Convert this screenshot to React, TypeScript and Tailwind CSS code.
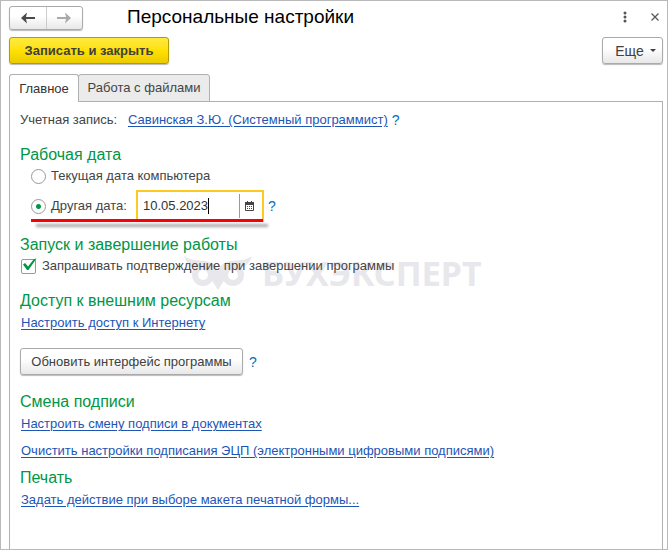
import { useState, type ReactNode } from "react";

function Heading({ children }: { children: ReactNode }) {
  return <h2 className="text-base leading-5 text-[#009646]">{children}</h2>;
}

function Link({ children }: { children: ReactNode }) {
  return (
    <a href="#" className="leading-5 text-[#1d55b5] underline underline-offset-2">
      {children}
    </a>
  );
}

function Help() {
  return (
    <button type="button" aria-label="Справка" className="text-sm leading-5 text-[#0070ba]">
      ?
    </button>
  );
}

function Arrow({ className }: { className: string }) {
  return (
    <svg viewBox="0 0 14 12" className={className} fill="currentColor" aria-hidden="true">
      <path d="M0 6 6 .5 5 4.900h9v2.200H5l1 4.400z" />
    </svg>
  );
}

function Watermark() {
  return (
    <div className="pointer-events-none absolute top-[154px] left-[174px] flex items-center gap-2.5 text-[#e7e7ec]">
      <svg viewBox="0 0 68 34" className="h-[34px] w-[68px]" fill="currentColor" aria-hidden="true">
        <path d="M0 0c7 5 14 4 21 5 7 1 11 4 13 10 2-6 6-9 13-10 7-1 14 0 21-5-2 6-5 9-9 11L46 10l-6 9 1 4-7 11-7-11 1-4-6-9L9 11C5 9 2 6 0 0z" />
        <path fillRule="evenodd" d="M19 8a11 11 0 1 0 0 22 11 11 0 0 0 0-22zM49 8a11 11 0 1 0 0 22 11 11 0 0 0 0-22z" />
        <circle cx="19" cy="19" r="5" fill="#fff" />
        <circle cx="49" cy="19" r="5" fill="#fff" />
      </svg>
      <span className="font-['Noto_Sans',sans-serif] text-[34px] leading-8 font-bold">БУХЭКСПЕРТ</span>
    </div>
  );
}

const plainButton =
  "rounded-[3px] border border-[#aaa] bg-linear-to-b from-white from-40% to-[#e8e8e8] text-[#404040] shadow-[0_1px_1px_#bbb]";

const radio =
  "h-[15px] w-[15px] appearance-none rounded-full border border-[#999] bg-white checked:bg-[radial-gradient(#009646_0_2px,white_3px)]";

export default function App() {
  const [other, setOther] = useState(true);
  const [date, setDate] = useState("10.05.2023");
  const [confirm, setConfirm] = useState(true);

  return (
    <main className="flex min-h-screen flex-col border border-[#b9b9b9] bg-white pr-1 pl-2 font-['Liberation_Sans',Arial,sans-serif] text-[13px] text-[#444]">
      <header className="flex h-8 items-center">
        <div className={`${plainButton} mt-px flex h-6 w-[74px]`}>
          <button type="button" aria-label="Назад" className="flex flex-1 items-center justify-center border-r border-[#ccc]">
            <Arrow className="h-3 w-3.5 text-[#4a4a4a]" />
          </button>
          <button type="button" aria-label="Вперед" className="flex flex-1 items-center justify-center">
            <Arrow className="h-3 w-3.5 rotate-180 text-[#aaa]" />
          </button>
        </div>
        <h1 className="ml-11 flex-1 text-[19px] leading-6 text-black">Персональные настройки</h1>
        <button type="button" aria-label="Меню" className="mr-6 text-[#555]">
          <svg viewBox="0 0 4 12" className="h-3 w-1" fill="currentColor" aria-hidden="true">
            <circle cx="2" cy="2" r="1.500" />
            <circle cx="2" cy="6" r="1.500" />
            <circle cx="2" cy="10" r="1.500" />
          </svg>
        </button>
        <button type="button" aria-label="Закрыть" className="mr-1 text-[#555]">
          <svg viewBox="0 0 8 8" className="h-2 w-2" stroke="currentColor" strokeWidth="1.2" aria-hidden="true">
            <path d="m.5.5 7 7m0-7-7 7" />
          </svg>
        </button>
      </header>

      <div className="mt-1 flex items-start justify-between">
        <button
          type="button"
          className="h-[27px] w-40 rounded-[3px] border border-[#b39b00] bg-linear-to-b from-[#ffea3c] via-[#ffe100] to-[#ebcb00] font-bold text-[#404040] shadow-[0_1px_1px_#bbb]"
        >
          Записать и закрыть
        </button>
        <button type="button" className={`${plainButton} flex h-[27px] w-[61px] items-center justify-center gap-1.5 pl-1.5 text-sm`}>
          Еще
          <svg viewBox="0 0 6 3" className="h-[3px] w-1.5" fill="currentColor" aria-hidden="true">
            <path d="M0 0h6L3 3z" />
          </svg>
        </button>
      </div>

      <div role="tablist" className="relative z-10 mt-2.5 -mb-px flex h-7">
        <button type="button" role="tab" aria-selected="true" className="w-[70px] rounded-t-[3px] border border-b-0 border-[#b0b0b0] bg-white text-[#333]">
          Главное
        </button>
        <button type="button" role="tab" aria-selected="false" className="-ml-px w-[132px] rounded-t-[3px] border border-[#b0b0b0] bg-[#ebebeb]">
          Работа с файлами
        </button>
      </div>

      <section role="tabpanel" className="relative flex-1 border border-b-0 border-[#b0b0b0] px-2.5 pt-2">
        <Watermark />
        <div className="relative flex flex-col items-start">
          <div className="flex">
            <span className="w-[108px] leading-5">Учетная запись:</span>
            <Link>Савинская З.Ю. (Системный программист)</Link>
            <span className="ml-1 flex"><Help /></span>
          </div>

          <div className="mt-[15px]"><Heading>Рабочая дата</Heading></div>
          <label className="mt-px ml-[11px] flex h-5 items-center gap-[5px]">
            <input type="radio" name="date" checked={!other} onChange={() => setOther(false)} className={radio} />
            Текущая дата компьютера
          </label>
          <div className="relative mt-1 ml-[11px] flex h-8 items-center">
            <label className="flex w-[105px] items-center gap-[5px]">
              <input type="radio" name="date" checked={other} onChange={() => setOther(true)} className={radio} />
              Другая дата:
            </label>
            <div className="flex h-8 w-32 items-center border-2 border-[#fcca20] bg-white">
              <div className="flex flex-1 items-center pl-[5px]">
                <input aria-label="Другая дата" value={date} onChange={(e) => setDate(e.target.value)} className="w-[65px] text-[#333] outline-none" />
                <span className="h-4 w-px bg-black" />
              </div>
              <button type="button" aria-label="Выбрать дату" className="flex h-6 w-[23px] items-center justify-center border-l border-[#999] pr-1 text-[#444]">
                <svg viewBox="0 0 9 10" className="h-2.5 w-[9px]" aria-hidden="true">
                  <path d="M.5 1.500h8v8h-8z" fill="#fff" stroke="currentColor" />
                  <path d="M0 1h9v3H0zM2 0h1v2H2zM6 0h1v2H6zM2 5h1v1H2zM4 5h1v1H4zM6 5h1v1H6zM2 7h1v1H2zM4 7h1v1H4zM6 7h1v1H6z" fill="currentColor" />
                </svg>
              </button>
            </div>
            <span className="ml-1 flex"><Help /></span>
            <span className="absolute top-[29px] left-0 h-[3px] w-[232px] bg-[#f80008] shadow-[5px_5px_3px_#aaa]" />
          </div>

          <div className="mt-[13px]"><Heading>Запуск и завершение работы</Heading></div>
          <label className="mt-px ml-px flex h-5 items-center gap-[6px]">
            <span className="relative flex">
              <input type="checkbox" checked={confirm} onChange={(e) => setConfirm(e.target.checked)} className="h-[15px] w-[15px] appearance-none rounded-[2px] border border-[#999] bg-white" />
              {confirm && (
                <svg viewBox="0 0 14 13" className="pointer-events-none absolute -top-px left-0.5 h-[13px] w-3.5" fill="#009646" aria-hidden="true">
                  <path d="M0 6.500 2 5l3 3.500L11 1l2.500-.5L5.500 12H4z" />
                </svg>
              )}
            </span>
            Запрашивать подтверждение при завершении программы
          </label>

          <div className="mt-[15px]"><Heading>Доступ к внешним ресурсам</Heading></div>
          <div className="mt-0.5 ml-px flex"><Link>Настроить доступ к Интернету</Link></div>
          <div className="mt-[15px] flex items-center gap-1.5">
            <button type="button" className={`${plainButton} h-[27px] w-[223px]`}>
              Обновить интерфейс программы
            </button>
            <Help />
          </div>

          <div className="mt-[17px]"><Heading>Смена подписи</Heading></div>
          <div className="mt-0.5 ml-px flex flex-col items-start gap-[7px]">
            <Link>Настроить смену подписи в документах</Link>
            <Link>Очистить настройки подписания ЭЦП (электронными цифровыми подписями)</Link>
          </div>

          <div className="mt-[7px]"><Heading>Печать</Heading></div>
          <div className="mt-0.5 ml-px flex"><Link>Задать действие при выборе макета печатной формы...</Link></div>
        </div>
      </section>
    </main>
  );
}
